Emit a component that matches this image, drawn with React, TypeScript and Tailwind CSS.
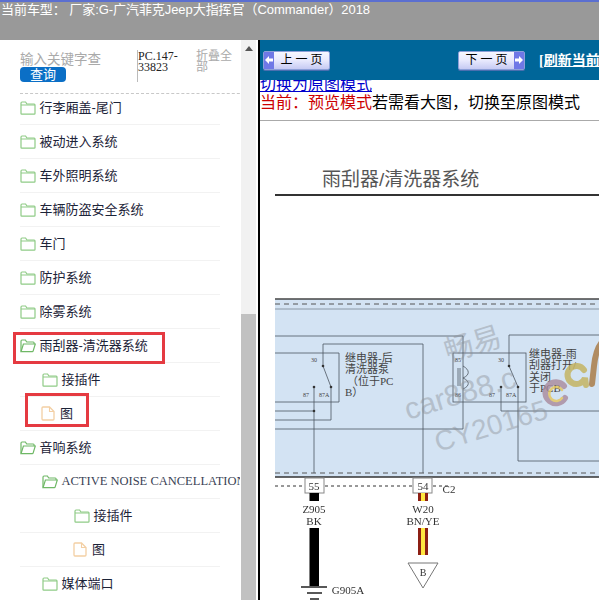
import React from 'react';

const cn = '"Liberation Sans", "Noto Sans CJK SC", sans-serif';

const FolderClosed = () => (
  <svg width="16" height="14" viewBox="0 0 16 14" fill="none" className="shrink-0">
    <path d="M1 12.5V2.2C1 1.5 1.4 1 2 1h3.6l1.3 2H14.2c.5 0 .8.4.8.9v8.6c0 .4-.3.7-.7.7H1.7c-.4 0-.7-.3-.7-.7z" fill="#fff" stroke="#8fcb86" strokeWidth="1.2" />
    <path d="M1 4h14" stroke="#8fcb86" strokeWidth="1" />
  </svg>
);

const FolderOpen = () => (
  <svg width="16" height="14" viewBox="0 0 16 14" fill="none" className="shrink-0">
    <path d="M1 12.5V2.2C1 1.5 1.4 1 2 1h3.4l1.3 2h6.6c.5 0 .8.4.8.9V5" fill="#fff" stroke="#6fb866" strokeWidth="1.2" />
    <path d="M1 12.7 3.4 5h11.9l-2.2 7.1c-.1.4-.4.6-.8.6H1z" fill="#fff" stroke="#6fb866" strokeWidth="1.2" />
  </svg>
);

const FileIcon = () => (
  <svg width="14" height="15" viewBox="0 0 14 15" fill="none" className="shrink-0">
    <path d="M1 2c0-.6.4-1 1-1h6.5L13 5.5V13c0 .6-.4 1-1 1H2c-.6 0-1-.4-1-1z" fill="#fff" stroke="#f3cfa4" strokeWidth="1.3" />
    <path d="M8.5 1v4.5H13" stroke="#f3cfa4" strokeWidth="1.1" />
  </svg>
);

type Row = { label: string; pad: string; icon: 'closed' | 'open' | 'file'; serif?: boolean };

const rows: Row[] = [
  { label: '行李厢盖-尾门', pad: 'pl-0', icon: 'closed' },
  { label: '被动进入系统', pad: 'pl-0', icon: 'closed' },
  { label: '车外照明系统', pad: 'pl-0', icon: 'closed' },
  { label: '车辆防盗安全系统', pad: 'pl-0', icon: 'closed' },
  { label: '车门', pad: 'pl-0', icon: 'closed' },
  { label: '防护系统', pad: 'pl-0', icon: 'closed' },
  { label: '除雾系统', pad: 'pl-0', icon: 'closed' },
  { label: '雨刮器-清洗器系统', pad: 'pl-0', icon: 'open' },
  { label: '接插件', pad: 'pl-[22px]', icon: 'closed' },
  { label: '图', pad: 'pl-[21px]', icon: 'file' },
  { label: '音响系统', pad: 'pl-0', icon: 'open' },
  { label: 'ACTIVE NOISE CANCELLATION', pad: 'pl-[22px]', icon: 'open', serif: true },
  { label: '接插件', pad: 'pl-[54px]', icon: 'closed' },
  { label: '图', pad: 'pl-[53px]', icon: 'file' },
  { label: '媒体端口', pad: 'pl-[22px]', icon: 'closed' },
];

const TreeRow = ({ row }: { row: Row }) => (
  <div className={`h-[34px] flex items-center border-b border-[#f2f2f2] ${row.pad}`}>
    {row.icon === 'closed' && <FolderClosed />}
    {row.icon === 'open' && <FolderOpen />}
    {row.icon === 'file' && <FileIcon />}
    <span
      className={`whitespace-nowrap ${row.icon === 'file' ? 'ml-[5px]' : 'ml-[3.5px]'} ${row.serif ? 'text-[#3a3f55] text-[12.5px]' : 'text-[#1c2338] text-[13px]'}`}
      style={{ fontFamily: row.serif ? '"Liberation Serif", serif' : undefined }}
    >
      {row.label}
    </span>
  </div>
);

const PagerButton = ({ label, dir }: { label: string; dir: 'left' | 'right' }) => (
  <div className={`w-[67px] h-[19px] shrink-0 rounded-[2px] border border-[#8c9fd8] bg-gradient-to-b from-[#f6f7ff] via-[#e8e9fd] to-[#c6caf3] flex items-center text-[12px] text-black shadow-[0_1px_0_#4a6fb0] ${dir === 'left' ? '' : 'flex-row-reverse'}`}>
    <div className="w-[10px] h-full bg-[#6f78e6] flex items-center justify-center shrink-0">
      <svg width="8" height="8" viewBox="0 0 8 8">
        <path d={dir === 'left' ? 'M0 4 4 0v2.4h4v3.2H4V8z' : 'M8 4 4 0v2.4H0v3.2h4V8z'} fill="#fff" />
      </svg>
    </div>
    <span className="flex-1 text-center tracking-[3px] pl-[3px]">{label}</span>
  </div>
);

const Diagram = () => (
  <svg width="324" height="303" viewBox="275 297 324 303" className="block blur-[0.35px]">
    <rect x="275" y="299" width="324" height="178" fill="#d3e3f3" />
    <path d="M275 299H599" stroke="#444" strokeWidth="1.5" />
    <path d="M275 304H599" stroke="#555" strokeWidth="1" strokeDasharray="5 4" />
    <path d="M275 309H599" stroke="#8a98a6" strokeWidth="1" />
    <path d="M275 473H599" stroke="#555" strokeWidth="1" strokeDasharray="5 4" />
    <path d="M275 477H599" stroke="#333" strokeWidth="1.5" />
    <path d="M275 486H304M325 486H413M433 486H451" stroke="#333" strokeWidth="1" strokeDasharray="3 3" />

    <g fill="none" stroke="#4d5660" strokeWidth="0.8">
      <path d="M275 336H463V429H275" />
      <path d="M423 473V344H323V366L331 387V420H275" />
      <path d="M275 353H339V402H275" />
      <path d="M275 411H314" />
      <path d="M314 473V387" />
      <rect x="453" y="353" width="73" height="49" />
      <path d="M599 335H509V366L518 387V461H599" />
      <path d="M501 387V411H599" />
      <path d="M463 366C470 370 470 375 463 378C470 381 470 386 463 389" />
      <path d="M460 368V386M458 368V386" />
    </g>
    <g fill="#333">
      <circle cx="323" cy="366" r="1.3" />
      <circle cx="331" cy="387" r="1.3" />
      <circle cx="314" cy="387" r="1.3" />
      <circle cx="314" cy="411" r="1.3" />
      <circle cx="509" cy="366" r="1.3" />
      <circle cx="518" cy="387" r="1.3" />
      <circle cx="501" cy="387" r="1.3" />
    </g>
    <g fontFamily='"Liberation Serif", serif' fontSize="6" fill="#444">
      <text x="311" y="362">30</text>
      <text x="303" y="397">87</text>
      <text x="319" y="397">87A</text>
      <text x="455" y="362">85</text>
      <text x="455" y="397">86</text>
      <text x="498" y="362">30</text>
      <text x="489" y="397">87</text>
      <text x="506" y="397">87A</text>
    </g>
    <g fontFamily='"Liberation Serif", "Noto Sans CJK SC", serif' fontSize="11" fill="#444">
      <text x="345" y="362">继电器-后</text>
      <text x="345" y="373">清洗器泵</text>
      <text x="347" y="385">（位于PC</text>
      <text x="345" y="396">B）</text>
      <text x="529" y="358">继电器-雨</text>
      <text x="529" y="369">刮器打开/</text>
      <text x="529" y="381">关闭</text>
      <text x="529" y="392">于PCB</text>
    </g>

    <g fontFamily={cn} fill="#8a8f96" opacity="0.42">
      <text x="448" y="362" fontSize="29" transform="rotate(-17 448 362)">畅易</text>
      <text x="408" y="420" fontSize="30" transform="rotate(-17 408 420)">car888.c</text>
      <text x="438" y="452" fontSize="28" transform="rotate(-17 438 452)">CY20165</text>
    </g>
    <g fill="none" strokeWidth="6" opacity="0.8" strokeLinecap="round">
      <path d="M564 386a10.500 10.500 0 1 0 1 12" stroke="#a98a9c" />
      <path d="M562 390a7 7 0 1 0 0 8" stroke="#e6c65a" strokeWidth="2.5" />
      <path d="M584 370a9 9 0 1 0 1 8l1 7" stroke="#c4b25a" />
      <path d="M592 384l2-18c1-10 3-18 8-24" stroke="#a8773f" />
    </g>

    <rect x="305" y="478" width="19" height="15" fill="#fff" stroke="#888" />
    <rect x="413" y="478" width="19" height="15" fill="#fff" stroke="#888" />
    <rect x="309.500" y="493" width="9.500" height="8" fill="#000" />
    <rect x="309.500" y="528" width="9.500" height="58" fill="#000" />
    <rect x="418" y="493" width="10" height="8" fill="#8c1f14" />
    <rect x="421" y="493" width="4" height="8" fill="#ffe640" />
    <rect x="418" y="528" width="10" height="27" fill="#8c1f14" />
    <rect x="421" y="528" width="4" height="27" fill="#ffe640" />
    <path d="M408 563H438L423 588Z" fill="#fff" stroke="#777" />
    <path d="M301 587H327M307 593H322M310 599H319" stroke="#222" strokeWidth="1.5" />
    <g fontFamily='"Liberation Serif", serif' fill="#333" textAnchor="middle">
      <text x="314" y="490" fontSize="11">55</text>
      <text x="423" y="490" fontSize="11">54</text>
      <text x="449" y="493" fontSize="11">C2</text>
      <text x="314" y="513" fontSize="11">Z905</text>
      <text x="314" y="525" fontSize="11">BK</text>
      <text x="423" y="513" fontSize="11">W20</text>
      <text x="423" y="525" fontSize="11">BN/YE</text>
      <text x="423" y="576" fontSize="10">B</text>
      <text x="348" y="594" fontSize="11">G905A</text>
    </g>
  </svg>
);

export default function App() {
  return (
    <div className="w-[599px] h-[600px] overflow-hidden bg-white flex flex-col" style={{ fontFamily: cn }}>
      <header className="h-[40px] shrink-0 bg-[#999999] border-t-2 border-[#5b6fd0] pl-[1px] text-[13px] leading-[15px] tracking-[-0.06px] text-white whitespace-nowrap">
        当前车型： 厂家:G-广汽菲克Jeep大指挥官（Commander）2018
      </header>
      <div className="flex flex-1 min-h-0">
        <aside className="w-[258px] shrink-0 relative overflow-hidden">
          <div className="w-[240px] overflow-hidden">
            <div className="h-[54px] w-[240px] flex border-b border-dashed border-[#c8c8c8] ml-[20px]">
              <div className="w-[117px] pt-[13px]">
                <div className="text-[13.500px] leading-[14px] text-[#aaaaaa] whitespace-nowrap">输入关键字查</div>
                <div className="w-[46px] h-[15px] rounded-[4px] bg-[#0b6fc6] text-white text-[13px] leading-[15px] text-center">查询</div>
              </div>
              <div className="w-[59px] h-[32px] mt-[10px] border-l border-[#bbbbbb] text-[12px] leading-[11px] text-[#222] pt-[1px]" style={{ fontFamily: '"Liberation Serif", serif' }}>
                PC.147-
                <br />
                33823
              </div>
              <div className="text-[12px] leading-[11px] text-[#aaaaaa] w-[37px] pt-[11px]">折叠全部</div>
            </div>
            <div className="ml-[20px] w-[200px] -mt-[3px]">
              {rows.map((row, i) => (
                <TreeRow key={i} row={row} />
              ))}
            </div>
          </div>
          {/* highlight boxes drawn on top of the tree */}
          <div className="absolute left-[13px] top-[292px] w-[152px] h-[32px] border-[3px] border-[#e53a41]" />
          <div className="absolute left-[25px] top-[353px] w-[64px] h-[34px] border-[3px] border-[#e53a41]" />
          {/* scrollbar */}
          <div className="absolute left-[241px] top-0 bottom-0 w-[15px] bg-[#f1f1f1] flex flex-col items-center">
            <div className="mt-[6px] w-0 h-0 border-l-[4px] border-r-[4px] border-b-[5px] border-l-transparent border-r-transparent border-b-[#555]" />
            <div className="absolute top-[274px] bottom-0 w-full bg-[#c1c1c1]" />
          </div>
        </aside>
        <main className="flex-1 min-w-0 border-l-[2px] border-black overflow-hidden">
          <div className="h-[40px] bg-[#006699] flex items-center pl-[3px] whitespace-nowrap">
            <PagerButton label="上一页" dir="left" />
            <div className="ml-[128px] shrink-0">
              <PagerButton label="下一页" dir="right" />
            </div>
            <span className="ml-[14px] shrink-0 text-[14px] font-bold text-white underline" style={{ fontFamily: '"Liberation Serif", "Noto Sans CJK SC", serif' }}>
              [刷新当前页]
            </span>
          </div>
          <div className="h-[41px] border-b border-[#aaaaaa] overflow-hidden whitespace-nowrap text-[16px] leading-[18px]">
            <div className="text-[#0000cc] underline -mt-[4px]">切换为原图模式</div>
            <div className="text-black">
              <span className="text-[#cc0000]">当前：预览模式</span>若需看大图，切换至原图模式
            </div>
          </div>
          <div className="pl-[15px] pt-[46px]">
            <div className="h-[29px] text-[19px] leading-[26px] pl-[47px] text-[#555] border-b-2 border-[#333]">雨刮器/清洗器系统</div>
          </div>
          <div className="pt-[101px] pl-[15px]">
            <Diagram />
          </div>
        </main>
      </div>
    </div>
  );
}
